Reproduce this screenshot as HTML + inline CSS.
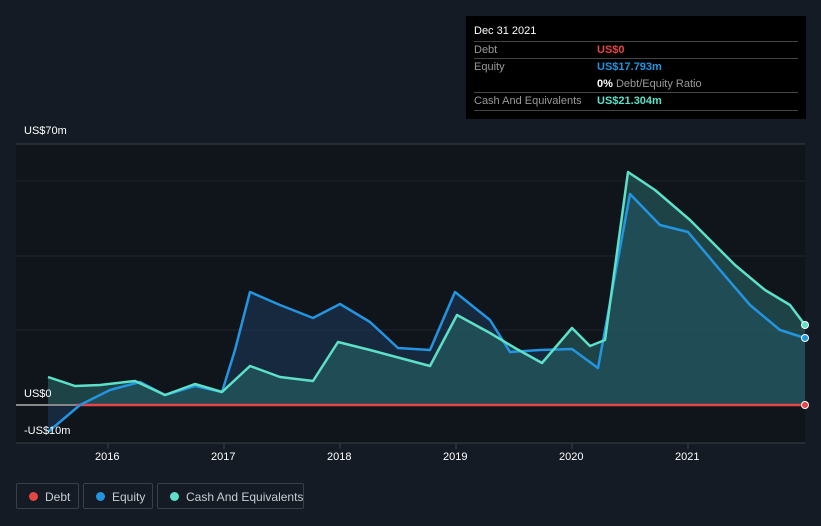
<!DOCTYPE html>
<html><head><style>
body{margin:0;width:821px;height:526px;background:#151b24;font-family:"Liberation Sans",sans-serif;overflow:hidden;position:relative}
.tip{position:absolute;left:466px;top:16px;width:340px;height:103px;background:#000;color:#fff;font-size:11px}
.row{position:absolute;left:8px;width:324px;border-top:1px solid #444;height:17px}
.row span{position:absolute;top:2px;white-space:nowrap}
.lg{position:absolute;top:483px;height:26px;border:1px solid #3a404a;border-radius:2px;color:#c8ccd2;font-size:12px;box-sizing:border-box;white-space:nowrap}
.lg i{position:absolute;left:12px;top:8px;width:9px;height:9px;border-radius:50%}
.lg span{position:absolute;left:28px;top:6px}
.ax{position:absolute;color:#fff;font-size:11px}
</style></head><body>
<svg width="821" height="526" style="position:absolute;left:0;top:0">
<rect x="16" y="144" width="789" height="299" fill="#10141b"/>
<line x1="16" y1="144" x2="805" y2="144" stroke="#3a404a"/>
<line x1="16" y1="181" x2="805" y2="181" stroke="#20262f"/>
<line x1="16" y1="256" x2="805" y2="256" stroke="#20262f"/>
<line x1="16" y1="330" x2="805" y2="330" stroke="#20262f"/>
<line x1="16" y1="443" x2="805" y2="443" stroke="#3a404a"/>
<g stroke="#3a404a"><line x1="108" y1="443" x2="108" y2="449"/><line x1="224" y1="443" x2="224" y2="449"/><line x1="340" y1="443" x2="340" y2="449"/><line x1="456" y1="443" x2="456" y2="449"/><line x1="572" y1="443" x2="572" y2="449"/><line x1="688" y1="443" x2="688" y2="449"/></g>
<polygon fill="#1b3a5c" fill-opacity="0.55" points="48,405 48,432 80,405 110,390 140,382 165,395 195,386 222,392 235,350 250,292 280,305 313,318 340,304 370,322 398,348 430,350 455,292 490,320 510,352 540,350 572,349 598,368 630,194 660,225 688,232 720,270 750,305 780,330 805,338 805,405"/>
<polygon fill="#2a6a6a" fill-opacity="0.55" points="48,405 48,377 75,386 100,385 135,381 165,395 195,384 222,392 250,366 280,377 313,381 338,342 370,350 400,358 430,366 457,315 490,333 515,348 542,363 572,328 590,346 605,340 628,172 655,190 690,220 735,265 765,290 790,305 805,325 805,405"/>
<line x1="16" y1="405" x2="805" y2="405" stroke="#888" stroke-width="2"/>
<line x1="76" y1="405" x2="805" y2="405" stroke="#e64545" stroke-width="2.5"/>
<polyline fill="none" stroke="#2394df" stroke-width="2.5" stroke-linejoin="round" points="48,432 80,405 110,390 140,382 165,395 195,386 222,392 235,350 250,292 280,305 313,318 340,304 370,322 398,348 430,350 455,292 490,320 510,352 540,350 572,349 598,368 630,194 660,225 688,232 720,270 750,305 780,330 805,338"/>
<polyline fill="none" stroke="#5de0c8" stroke-width="2.5" stroke-linejoin="round" points="48,377 75,386 100,385 135,381 165,395 195,384 222,392 250,366 280,377 313,381 338,342 370,350 400,358 430,366 457,315 490,333 515,348 542,363 572,328 590,346 605,340 628,172 655,190 690,220 735,265 765,290 790,305 805,325"/>
<circle cx="805" cy="405" r="3.5" fill="#e64545" stroke="#fff"/>
<circle cx="805" cy="338" r="3.5" fill="#2394df" stroke="#fff"/>
<circle cx="805" cy="325" r="3.5" fill="#5de0c8" stroke="#fff"/>
</svg>
<div class="ax" style="left:24px;top:125px">US$70m</div>
<div class="ax" style="left:24px;top:388px">US$0</div>
<div class="ax" style="left:24px;top:425px">-US$10m</div>
<div class="ax" style="left:95px;top:451px">2016</div>
<div class="ax" style="left:211px;top:451px">2017</div>
<div class="ax" style="left:327px;top:451px">2018</div>
<div class="ax" style="left:443px;top:451px">2019</div>
<div class="ax" style="left:559px;top:451px">2020</div>
<div class="ax" style="left:675px;top:451px">2021</div>
<div class="tip">
<div style="position:absolute;left:8px;top:9px">Dec 31 2021</div>
<div class="row" style="top:25px"><span style="color:#999">Debt</span><span style="left:123px;color:#e64545;font-weight:bold">US$0</span></div>
<div class="row" style="top:42px"><span style="color:#999">Equity</span><span style="left:123px;color:#2394df;font-weight:bold">US$17.793m</span></div>
<div style="position:absolute;left:131px;top:62px;color:#999"><b style="color:#fff">0%</b> Debt/Equity Ratio</div>
<div class="row" style="top:76px;border-bottom:1px solid #444"><span style="color:#999">Cash And Equivalents</span><span style="left:123px;color:#5de0c8;font-weight:bold">US$21.304m</span></div>
</div>
<div class="lg" style="left:16px;width:63px"><i style="background:#e64545"></i><span>Debt</span></div>
<div class="lg" style="left:83px;width:70px"><i style="background:#2394df"></i><span>Equity</span></div>
<div class="lg" style="left:157px;width:147px"><i style="background:#5de0c8"></i><span>Cash And Equivalents</span></div>
</body></html>
